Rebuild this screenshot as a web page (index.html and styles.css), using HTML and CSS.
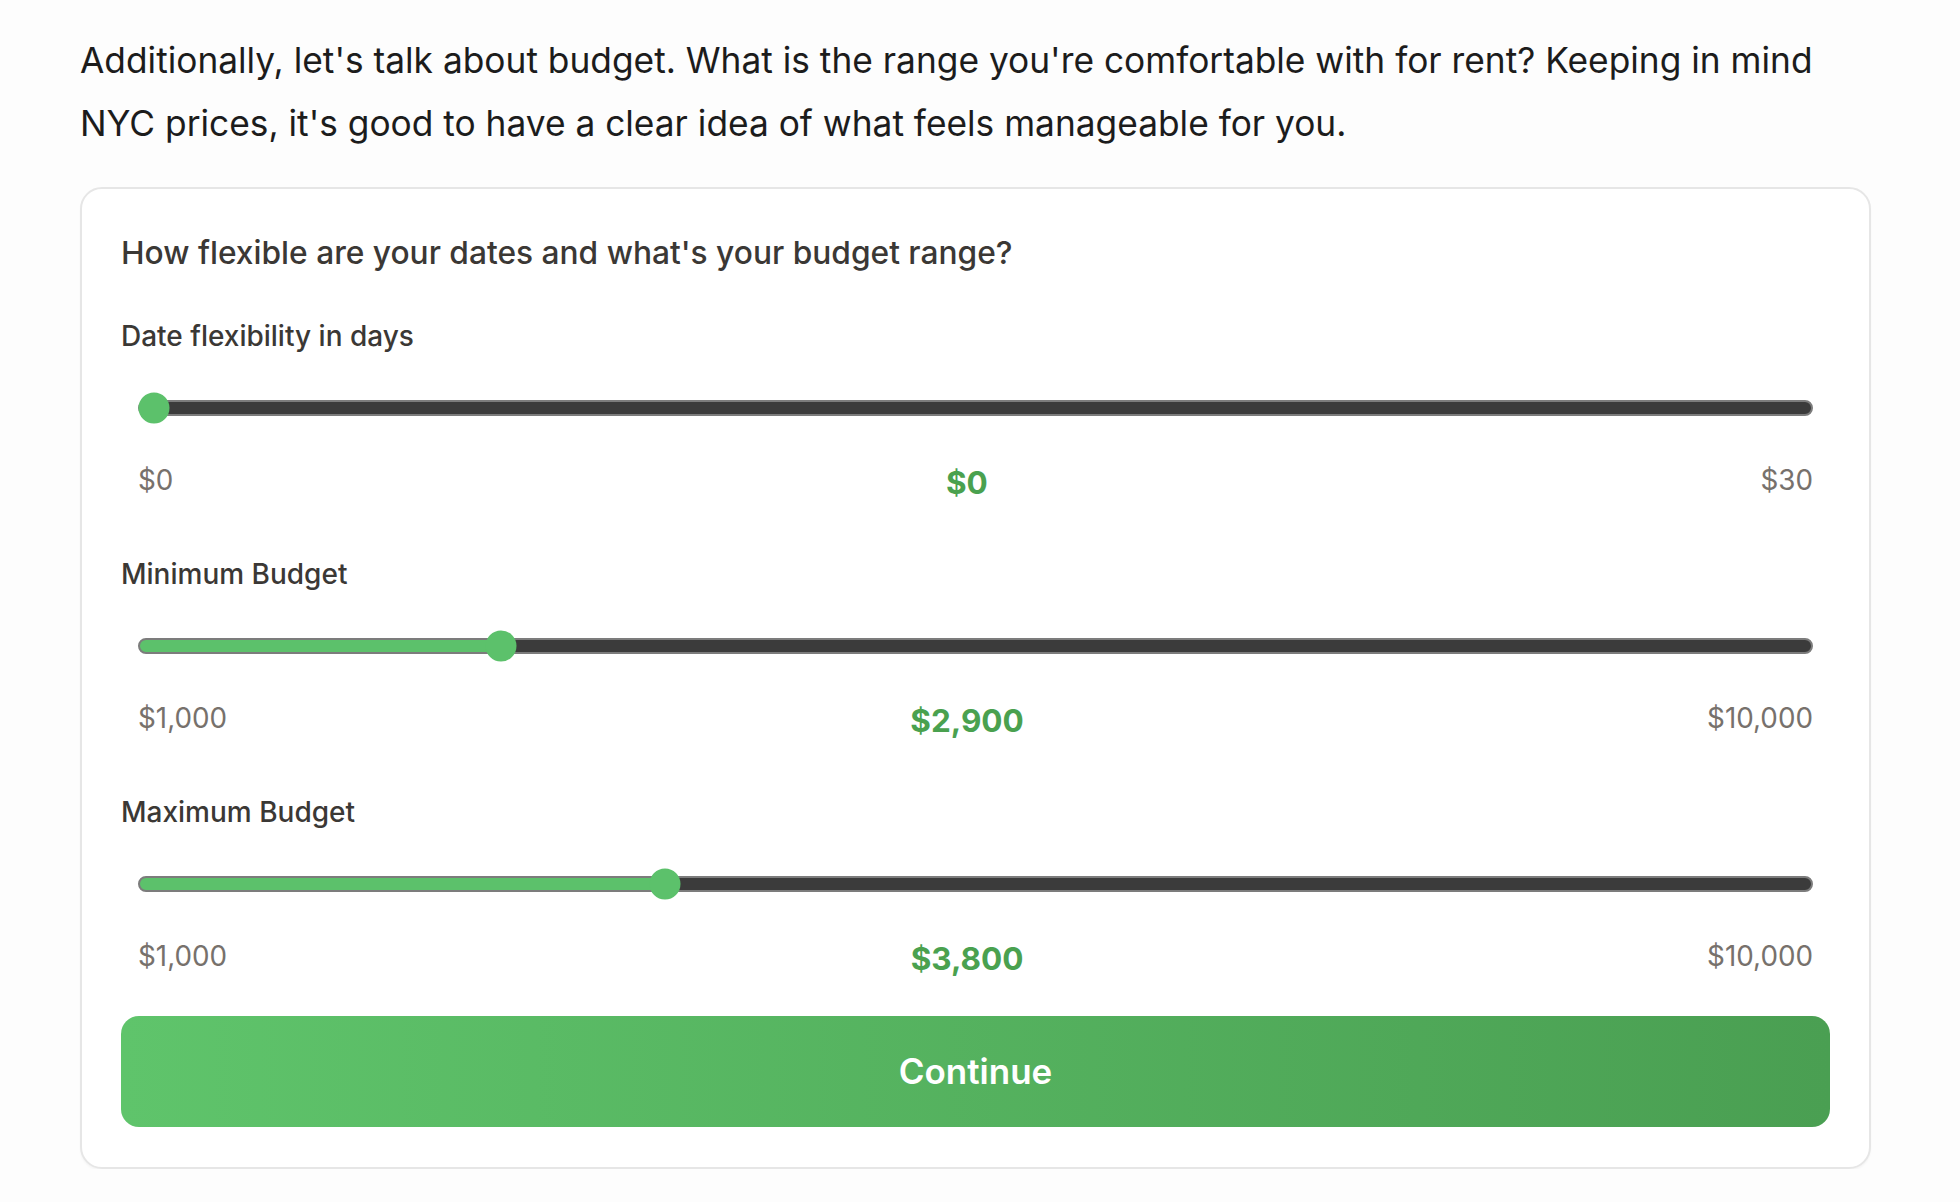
FILE: index.html
```html
<!DOCTYPE html>
<html lang="en">
<head>
<meta charset="utf-8">
<title>Budget</title>
<link rel="stylesheet" href="styles.css">
</head>
<body>
<main class="page">
  <p class="intro">Additionally, let's talk about budget. What is the range you're comfortable with for rent? Keeping in mind NYC prices, it's good to have a clear idea of what feels manageable for you.</p>
  <section class="card">
    <h2 class="question">How flexible are your dates and what's your budget range?</h2>

    <div class="field field-first">
      <div class="field-label">Date flexibility in days</div>
      <div class="slider-area">
        <div class="slider" style="--p:0">
          <div class="track"></div>
          <div class="thumb"></div>
        </div>
        <div class="scale">
          <span class="end">$0</span>
          <span class="value">$0</span>
          <span class="end">$30</span>
        </div>
      </div>
    </div>

    <div class="field">
      <div class="field-label">Minimum Budget</div>
      <div class="slider-area">
        <div class="slider" style="--p:0.21111">
          <div class="track"></div>
          <div class="thumb"></div>
        </div>
        <div class="scale">
          <span class="end">$1,000</span>
          <span class="value">$2,900</span>
          <span class="end">$10,000</span>
        </div>
      </div>
    </div>

    <div class="field">
      <div class="field-label">Maximum Budget</div>
      <div class="slider-area">
        <div class="slider" style="--p:0.31111">
          <div class="track"></div>
          <div class="thumb"></div>
        </div>
        <div class="scale">
          <span class="end">$1,000</span>
          <span class="value">$3,800</span>
          <span class="end">$10,000</span>
        </div>
      </div>
    </div>

    <button class="continue" type="button">Continue</button>
  </section>
</main>
</body>
</html>
```
FILE: styles.css
```css
* {
  box-sizing: border-box;
}

html, body {
  margin: 0;
  padding: 0;
  background: #fdfdfd;
}

body {
  font-family: Inter, "Noto Sans", "Liberation Sans", sans-serif;
}

.page {
  width: 1791px;
  margin-left: 80px;
  padding-top: 29px;
}

.intro {
  margin: 0;
  font-size: 35.3px;
  line-height: 63px;
  color: #1c1c1c;
}

.card {
  margin-top: 32px;
  background: #ffffff;
  border: 2px solid #e6e6e6;
  border-radius: 22px;
  padding: 46px 39px 40px;
  box-shadow: 0 2px 2px rgba(0, 0, 0, 0.03);
}

.question {
  margin: 0;
  font-size: 31.7px;
  line-height: 36px;
  font-weight: 500;
  color: #3b3835;
}

.field {
  margin-top: 58.5px;
}

.field-first {
  margin-top: 49px;
}

.field-label {
  font-size: 28px;
  line-height: 32px;
  font-weight: 500;
  color: #3b3835;
}

.slider-area {
  padding: 0 17px;
}

.slider {
  position: relative;
  height: 32px;
  margin-top: 40px;
  display: flex;
  align-items: center;
}

.track {
  flex: 1;
  height: 16px;
  border: 2px solid #7c7c7c;
  border-radius: 8px;
  background: linear-gradient(to right,
    #5cc16b calc(13.5px + var(--p) * (100% - 27px)),
    #3b3b3b calc(13.5px + var(--p) * (100% - 27px)));
}

.thumb {
  position: absolute;
  top: 50%;
  left: calc(15.5px + var(--p) * (100% - 31px));
  width: 31px;
  height: 31px;
  border-radius: 50%;
  background: #5cc16b;
  transform: translate(-50%, -50%);
}

.scale {
  display: flex;
  justify-content: space-between;
  align-items: flex-start;
  margin-top: 40.5px;
}

.end {
  font-size: 27.8px;
  line-height: 30px;
  color: #77716c;
}

.value {
  margin-top: 1px;
  font-size: 31.5px;
  line-height: 34px;
  font-weight: 700;
  color: #4aa14f;
}

.continue {
  display: block;
  width: 100%;
  height: 111px;
  margin-top: 40px;
  border: 0;
  border-radius: 18px;
  background: linear-gradient(to right, #5fc46b, #4a9f52);
  color: #ffffff;
  font-family: Inter, "Noto Sans", "Liberation Sans", sans-serif;
  font-size: 35px;
  font-weight: 600;
  cursor: pointer;
}
```
